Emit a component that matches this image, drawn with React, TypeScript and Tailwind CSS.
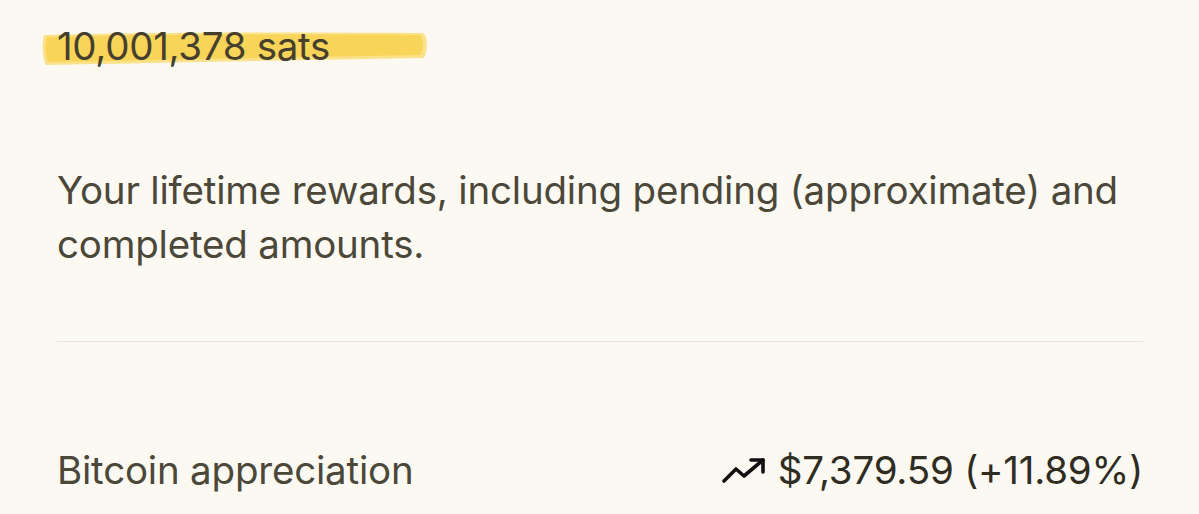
import React from "react";

function TrendIcon() {
  return (
    <svg width="46" height="28" viewBox="0 0 46 28" fill="none" stroke="#111" strokeWidth="3.6" strokeLinecap="round" strokeLinejoin="round">
      <polyline points="4,25 16,13 24,20 43,4" />
      <polyline points="31,4 43,4 43,16" />
    </svg>
  );
}

export default function App() {
  return (
    <div className="w-[1199px] h-[514px] overflow-hidden bg-[#fcf9f2] text-[#4b4739]" style={{ fontFamily: "Inter, 'Liberation Sans', sans-serif" }}>
      <div className="pl-[57px] pr-[56px] pt-[26px]">
        <div className="relative inline-block">
          <svg className="absolute left-[-15px] top-[6px]" width="386" height="34" viewBox="0 0 386 34" preserveAspectRatio="none">
            <path d="M2,3 C100,0 250,0 381,1 C386,3 386,23 381,26 C250,28 120,31 4,33 C0,26 0,10 2,3 Z" fill="#fbe28a" />
            <path d="M5,5 C100,2 250,2 378,3 C382,6 382,20 378,23 C250,25 120,28 6,30 C3,24 3,11 5,5 Z" fill="#f8d458" />
          </svg>
          <span className="relative block text-[38.5px] leading-[40px] tracking-[-0.3px] text-[#463f2e]">10,001,378 sats</span>
        </div>
        <p className="mt-[97px] text-[38.5px] leading-[54px] tracking-[-0.2px]">
          Your lifetime rewards, including pending (approximate) and completed amounts.
        </p>
        <div className="mt-[70px] h-px bg-[#e7e3d9]" />
        <div className="mt-[106px] flex items-center justify-between text-[38.5px] leading-[44px] tracking-[-0.2px]">
          <span>Bitcoin appreciation</span>
          <span className="flex items-center gap-[12px] text-[#2f2c22]">
            <TrendIcon />
            <span>$7,379.59 (+11.89%)</span>
          </span>
        </div>
      </div>
    </div>
  );
}
